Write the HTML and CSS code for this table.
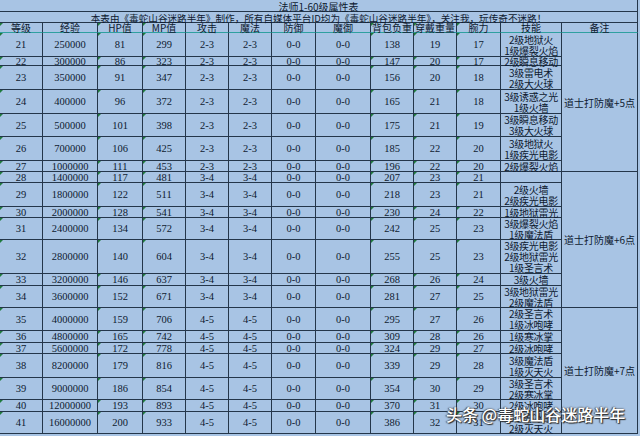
FILE: index.html
```html
<!DOCTYPE html>
<html lang="zh">
<head>
<meta charset="utf-8">
<title>法师1-60级属性表</title>
<link rel="stylesheet" href="styles.css">
</head>
<body>
<div class="sheet">
  <div class="title">法师1-60级属性表</div>
  <div class="subtitle">本表由《毒蛇山谷迷路半年》制作，所有自媒体平台ID均为《毒蛇山谷迷路半年》，关注我，玩传奇不迷路！</div>
  <div class="r head">
    <div>等级</div><div>经验</div><div>HP值</div><div>MP值</div><div>攻击</div><div>魔法</div><div>防御</div><div>魔御</div><div>背包负重</div><div>穿戴重量</div><div>腕力</div><div>技能</div><div>备注</div>
  </div>
  <div class="r">
    <div>21</div><div>250000</div><div>81</div><div>299</div><div>2-3</div><div>2-3</div><div>0-0</div><div>0-0</div><div>138</div><div>19</div><div>17</div><div class="sk">2级地狱火<br>1级爆裂火焰</div><div class="note">道士打防魔+5点</div>
  </div>
  <div class="r">
    <div>22</div><div>300000</div><div>86</div><div>323</div><div>2-3</div><div>2-3</div><div>0-0</div><div>0-0</div><div>147</div><div>20</div><div>17</div><div class="sk">2级瞬息移动</div>
  </div>
  <div class="r">
    <div>23</div><div>350000</div><div>91</div><div>347</div><div>2-3</div><div>2-3</div><div>0-0</div><div>0-0</div><div>156</div><div>20</div><div>18</div><div class="sk">3级雷电术<br>2级大火球</div>
  </div>
  <div class="r">
    <div>24</div><div>400000</div><div>96</div><div>372</div><div>2-3</div><div>2-3</div><div>0-0</div><div>0-0</div><div>165</div><div>21</div><div>18</div><div class="sk">3级诱惑之光<br>1级火墙</div>
  </div>
  <div class="r">
    <div>25</div><div>500000</div><div>101</div><div>398</div><div>2-3</div><div>2-3</div><div>0-0</div><div>0-0</div><div>175</div><div>21</div><div>19</div><div class="sk">3级瞬息移动<br>3级大火球</div>
  </div>
  <div class="r">
    <div>26</div><div>700000</div><div>106</div><div>425</div><div>2-3</div><div>2-3</div><div>0-0</div><div>0-0</div><div>185</div><div>22</div><div>20</div><div class="sk">3级地狱火<br>1级疾光电影</div>
  </div>
  <div class="r">
    <div>27</div><div>1000000</div><div>111</div><div>453</div><div>2-3</div><div>2-3</div><div>0-0</div><div>0-0</div><div>196</div><div>22</div><div>20</div><div class="sk">2级爆裂火焰</div>
  </div>
  <div class="r">
    <div>28</div><div>1400000</div><div>117</div><div>481</div><div>3-4</div><div>3-4</div><div>0-0</div><div>0-0</div><div>207</div><div>23</div><div>21</div><div class="sk"></div><div class="note">道士打防魔+6点</div>
  </div>
  <div class="r">
    <div>29</div><div>1800000</div><div>122</div><div>511</div><div>3-4</div><div>3-4</div><div>0-0</div><div>0-0</div><div>218</div><div>23</div><div>21</div><div class="sk">2级火墙<br>2级疾光电影</div>
  </div>
  <div class="r">
    <div>30</div><div>2000000</div><div>128</div><div>541</div><div>3-4</div><div>3-4</div><div>0-0</div><div>0-0</div><div>230</div><div>24</div><div>22</div><div class="sk">1级地狱雷光</div>
  </div>
  <div class="r">
    <div>31</div><div>2400000</div><div>134</div><div>572</div><div>3-4</div><div>3-4</div><div>0-0</div><div>0-0</div><div>242</div><div>25</div><div>23</div><div class="sk">3级爆裂火焰<br>1级魔法盾</div>
  </div>
  <div class="r">
    <div>32</div><div>2800000</div><div>140</div><div>604</div><div>3-4</div><div>3-4</div><div>0-0</div><div>0-0</div><div>255</div><div>25</div><div>23</div><div class="sk">3级疾光电影<br>2级地狱雷光<br>1级圣言术</div>
  </div>
  <div class="r">
    <div>33</div><div>3200000</div><div>146</div><div>637</div><div>3-4</div><div>3-4</div><div>0-0</div><div>0-0</div><div>268</div><div>26</div><div>24</div><div class="sk">3级火墙</div>
  </div>
  <div class="r">
    <div>34</div><div>3600000</div><div>152</div><div>671</div><div>3-4</div><div>3-4</div><div>0-0</div><div>0-0</div><div>281</div><div>27</div><div>25</div><div class="sk">3级地狱雷光<br>2级魔法盾</div>
  </div>
  <div class="r">
    <div>35</div><div>4000000</div><div>159</div><div>706</div><div>4-5</div><div>4-5</div><div>0-0</div><div>0-0</div><div>295</div><div>27</div><div>26</div><div class="sk">2级圣言术<br>1级冰咆哮</div><div class="note">道士打防魔+7点</div>
  </div>
  <div class="r">
    <div>36</div><div>4800000</div><div>165</div><div>742</div><div>4-5</div><div>4-5</div><div>0-0</div><div>0-0</div><div>309</div><div>28</div><div>26</div><div class="sk">1级寒冰掌</div>
  </div>
  <div class="r">
    <div>37</div><div>5600000</div><div>172</div><div>778</div><div>4-5</div><div>4-5</div><div>0-0</div><div>0-0</div><div>324</div><div>29</div><div>27</div><div class="sk">2级冰咆哮</div>
  </div>
  <div class="r">
    <div>38</div><div>8200000</div><div>179</div><div>816</div><div>4-5</div><div>4-5</div><div>0-0</div><div>0-0</div><div>339</div><div>29</div><div>28</div><div class="sk">3级魔法盾<br>1级灭天火</div>
  </div>
  <div class="r">
    <div>39</div><div>9000000</div><div>186</div><div>854</div><div>4-5</div><div>4-5</div><div>0-0</div><div>0-0</div><div>354</div><div>30</div><div>29</div><div class="sk">3级圣言术<br>2级寒冰掌</div>
  </div>
  <div class="r">
    <div>40</div><div>12000000</div><div>193</div><div>893</div><div>4-5</div><div>4-5</div><div>0-0</div><div>0-0</div><div>370</div><div>31</div><div>30</div><div class="sk">2级冰咆哮</div>
  </div>
  <div class="r">
    <div>41</div><div>16000000</div><div>200</div><div>933</div><div>4-5</div><div>4-5</div><div>0-0</div><div>0-0</div><div>386</div><div>32</div><div>31</div><div class="sk">3级寒冰掌<br>2级灭天火</div>
  </div>
  <div class="mark">头条 @毒蛇山谷迷路半年</div>
</div>
</body>
</html>
```

FILE: styles.css
```css
html, body {
  margin: 0;
  padding: 0;
  background: #a8c4e4;
}
body {
  width: 640px;
  height: 436px;
  overflow: hidden;
}
.sheet {
  position: relative;
  display: grid;
  width: 638px;
  grid-template-columns: 43px 55px 45px 43px 43px 43px 44px 55px 43px 43px 44px 61px 76px;
  grid-template-rows: 12px 11px 10px 24px 9px 24px 24px 23px 24px 11px 11px 24px 11px 22px 34px 12px 22px 23px 12px 11px 24px 22px 12px 22px;
  font-family: "Liberation Serif", "Noto Sans CJK SC", serif;
  font-size: 10.5px;
  color: #0e1a30;
}
.title, .subtitle {
  grid-column: 1 / -1;
  display: flex;
  align-items: center;
  justify-content: center;
  border-bottom: 1px solid #24364a;
  border-right: 1px solid #24364a;
  box-sizing: border-box;
  white-space: nowrap;
  font-family: "Noto Sans CJK SC", sans-serif;
  font-size: 10px;
}
.title {
  padding-top: 2px;
}
.subtitle {
  font-size: 9.6px;
  padding-top: 1px;
}
.r {
  display: contents;
}
.r > div {
  position: relative;
  display: flex;
  align-items: center;
  justify-content: center;
  text-align: center;
  box-sizing: border-box;
  border-right: 1px solid #24364a;
  border-bottom: 1px solid #24364a;
  white-space: nowrap;
  line-height: 11px;
  min-height: 0;
}
.head > div {
  font-family: "Noto Sans CJK SC", sans-serif;
  font-size: 10px;
  border-bottom-color: #2fa0a0;
}
.r > .sk {
  font-family: "Noto Sans CJK SC", sans-serif;
  font-size: 10px;
  letter-spacing: -0.3px;
}
.r > .note {
  grid-row: span 7;
  font-family: "Noto Sans CJK SC", sans-serif;
  font-size: 10px;
}
.r > div:nth-child(1)::before,
.r > div:nth-child(3)::before,
.r > div:nth-child(4)::before,
.r > div:nth-child(9)::before,
.r > div:nth-child(10)::before,
.r > div:nth-child(11)::before {
  content: "";
  position: absolute;
  top: 0;
  left: 0;
  border-top: 3px solid #1f7a3c;
  border-right: 3px solid transparent;
}
.mark {
  position: absolute;
  left: 446px;
  top: 402px;
  font-family: "Noto Sans CJK SC", sans-serif;
  font-size: 16px;
  font-weight: 500;
  color: #ffffff;
  white-space: nowrap;
  text-shadow: 1px 1px 1px #2a2a2a, -1px 0 1px #555, 0 0 2px #333;
}
```
